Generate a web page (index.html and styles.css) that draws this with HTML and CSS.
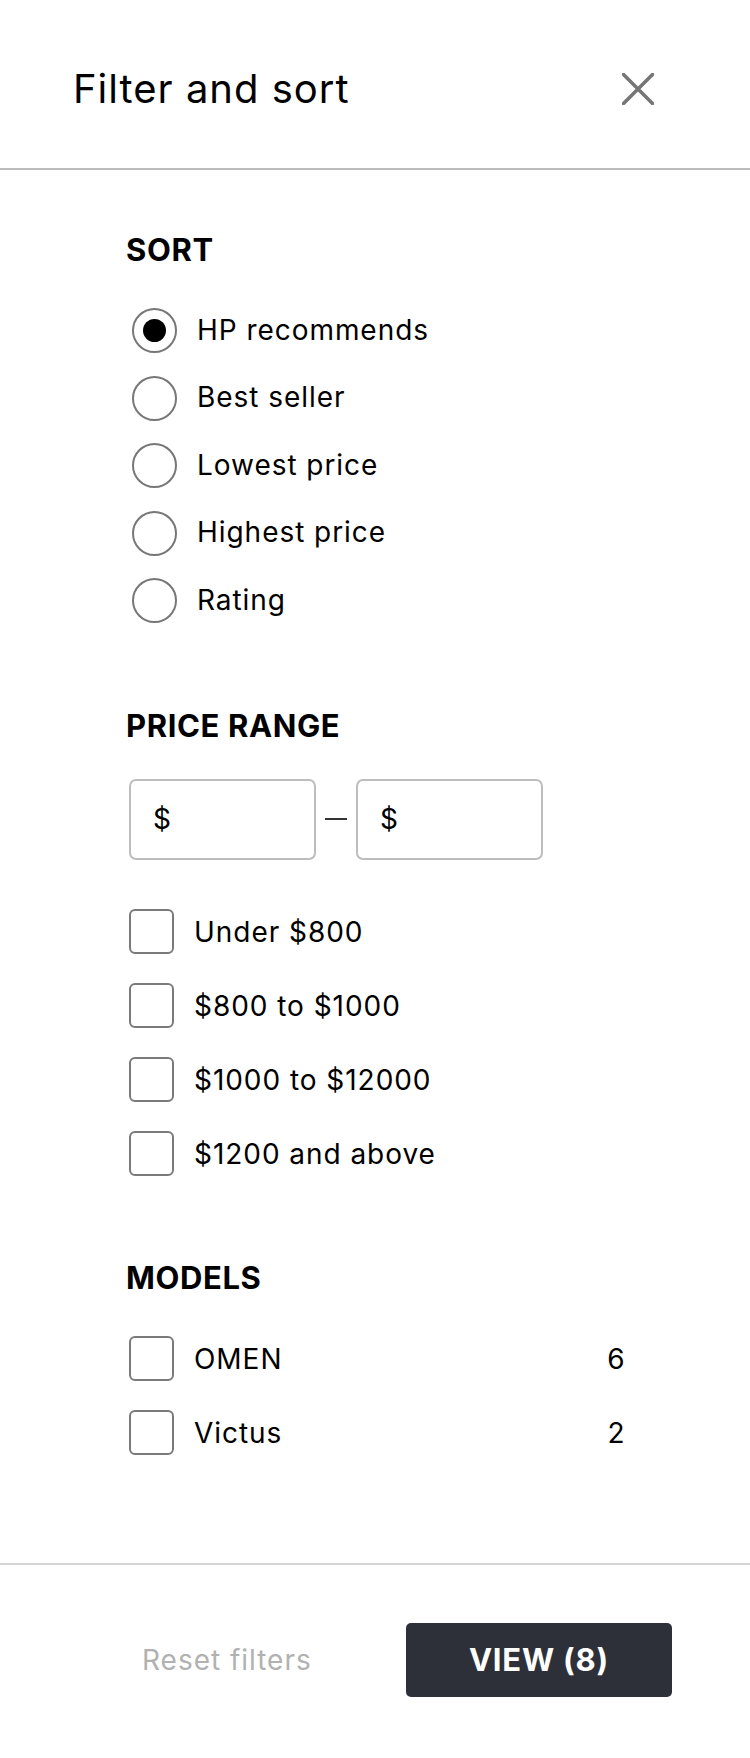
FILE: index.html
```html
<!DOCTYPE html>
<html lang="en">
<head>
<meta charset="utf-8">
<title>Filter and sort</title>
<link rel="stylesheet" href="styles.css">
</head>
<body>
<div class="panel">
  <header class="header">
    <h1 class="title">Filter and sort</h1>
    <button class="close" aria-label="Close">
      <svg width="32" height="32" viewBox="0 0 32 32"><path d="M1.5 1.5 L30.5 30.5 M30.5 1.5 L1.5 30.5" stroke="#767676" stroke-width="3.6" fill="none" stroke-linecap="square"/></svg>
    </button>
  </header>

  <main class="content">
    <section class="section sort">
      <h2 class="heading">SORT</h2>
      <ul class="list radios">
        <li class="row"><span class="radio checked"></span><span class="label">HP recommends</span></li>
        <li class="row"><span class="radio"></span><span class="label">Best seller</span></li>
        <li class="row"><span class="radio"></span><span class="label">Lowest price</span></li>
        <li class="row"><span class="radio"></span><span class="label">Highest price</span></li>
        <li class="row"><span class="radio"></span><span class="label">Rating</span></li>
      </ul>
    </section>

    <section class="section price">
      <h2 class="heading">PRICE RANGE</h2>
      <div class="range">
        <div class="input"><span class="cur">$</span></div>
        <span class="dash"></span>
        <div class="input"><span class="cur">$</span></div>
      </div>
      <ul class="list checks">
        <li class="crow"><span class="box"></span><span class="label">Under $800</span></li>
        <li class="crow"><span class="box"></span><span class="label">$800 to $1000</span></li>
        <li class="crow"><span class="box"></span><span class="label">$1000 to $12000</span></li>
        <li class="crow"><span class="box"></span><span class="label">$1200 and above</span></li>
      </ul>
    </section>

    <section class="section models">
      <h2 class="heading">MODELS</h2>
      <ul class="list checks modlist">
        <li class="crow"><span class="box"></span><span class="label">OMEN</span><span class="count">6</span></li>
        <li class="crow"><span class="box"></span><span class="label">Victus</span><span class="count">2</span></li>
      </ul>
    </section>
  </main>

  <footer class="footer">
    <span class="reset">Reset filters</span>
    <button class="view">VIEW (8)</button>
  </footer>
</div>
</body>
</html>
```

FILE: styles.css
```css
* { box-sizing: border-box; }
html, body { margin: 0; padding: 0; background: #fff; }
body {
  font-family: Inter, "Noto Sans", "Liberation Sans", sans-serif;
  color: #000;
  width: 750px;
  letter-spacing: 0.027em;
}
.panel {
  height: 1758px;
  display: flex;
  flex-direction: column;
}
.header {
  height: 170px;
  flex: none;
  border-bottom: 2px solid #bcbcbc;
  display: flex;
  align-items: center;
  padding: 10px 96px 0 73px;
}
.title {
  margin: 0;
  font-size: 40px;
  font-weight: 400;
  line-height: 48px;
  letter-spacing: 0.025em;
  flex: 1;
}
.close {
  border: 0;
  background: none;
  padding: 0;
  width: 32px;
  height: 32px;
  display: block;
}
.close svg { display: block; }
.content {
  flex: 1;
  padding: 61px 125px 0 128px;
}
.heading {
  margin: 0 0 0 -2px;
  font-size: 31px;
  font-weight: 700;
  line-height: 38px;
  letter-spacing: 0.02em;
}
.list { list-style: none; margin: 0; padding: 0; }
.radios { margin-top: 28px; }
.row {
  height: 67.5px;
  display: flex;
  align-items: center;
}
.radio {
  width: 45px;
  height: 45px;
  border: 2px solid #777;
  border-radius: 50%;
  margin-left: 4px;
  margin-right: 20px;
  display: flex;
  align-items: center;
  justify-content: center;
  flex: none;
}
.radio.checked::after {
  content: "";
  width: 23px;
  height: 23px;
  border-radius: 50%;
  background: #000;
}
.label {
  font-size: 28px;
  line-height: 34px;
  letter-spacing: 0.034em;
  margin-top: -2px;
}
.crow .label { margin-top: 0; }
.price { margin-top: 72px; }
.range {
  margin-top: 34px;
  display: flex;
  align-items: center;
  padding-left: 1px;
}
.input {
  width: 187px;
  height: 81px;
  border: 2px solid #bdbdbd;
  border-radius: 7px;
  display: flex;
  align-items: center;
  padding-left: 22px;
}
.cur { font-size: 28px; line-height: 34px; }
.dash {
  width: 22px;
  height: 2px;
  background: #333;
  margin: 0 9px;
}
.checks { margin-top: 35px; }
.crow {
  height: 74px;
  display: flex;
  align-items: center;
}
.box {
  width: 45px;
  height: 45px;
  border: 2px solid #7a7a7a;
  border-radius: 6px;
  margin-left: 1px;
  margin-right: 20px;
  flex: none;
}
.models { margin-top: 68px; }
.modlist { margin-top: 25px; }
.count {
  margin-left: auto;
  font-size: 28px;
  line-height: 34px;
}
.footer {
  flex: none;
  height: 195px;
  border-top: 2px solid #d4d4d4;
  display: flex;
  align-items: center;
  padding: 0 78px 4px 142px;
}
.reset {
  font-size: 28px;
  color: #b1b1b1;
  line-height: 34px;
  letter-spacing: 0.035em;
}
.view {
  margin-left: auto;
  width: 266px;
  height: 74px;
  border: 0;
  border-radius: 5px;
  background: #2e3039;
  color: #fff;
  font-family: Inter, "Noto Sans", "Liberation Sans", sans-serif;
  font-size: 31px;
  font-weight: 700;
  letter-spacing: 0.026em;
  padding: 0;
}
```
